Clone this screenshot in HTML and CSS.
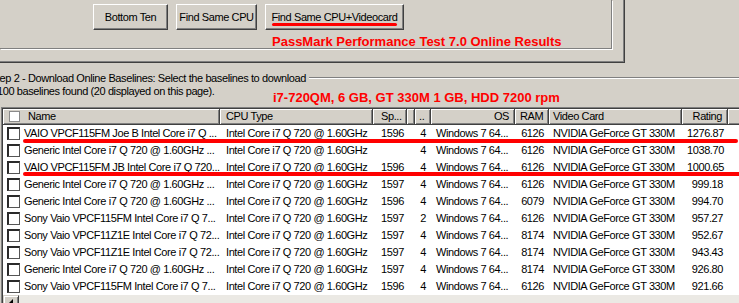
FILE: index.html
```html
<!DOCTYPE html>
<html lang="en">
<head>
    <meta charset="UTF-8">
    <title>PassMark Performance Test 7.0 Online Results</title>
    <link rel="stylesheet" href="styles.css">
</head>
<body>

    <!-- Search buttons panel -->
    <div class="panel">
        <div class="panel-inner">
            <div class="buttons">
                <button class="btn btn-bottom">Bottom Ten</button>
                <button class="btn btn-cpu">Find Same CPU</button>
                <button class="btn btn-video">Find Same CPU+Videocard<span class="ink ink-btn"></span></button>
            </div>
            <div class="note note-title">PassMark Performance Test 7.0 Online Results</div>
        </div>
    </div>

    <!-- Step 2 group -->
    <div class="step">
        <div class="legend-row">
            <span class="legend">Step 2 - Download Online Baselines: Select the baselines to download</span>
            <span class="etch"></span>
        </div>
        <div class="info-row">
            <span class="count">100 baselines found (20 displayed on this page).</span>
            <span class="note note-spec">i7-720QM, 6 GB, GT 330M 1 GB, HDD 7200 rpm</span>
        </div>

        <div class="list">
            <div class="list-inner">
                <div class="hdr">
                    <div class="hc c-name"><span class="chk chk-hdr"></span>Name</div>
                    <div class="hc c-cpu">CPU Type</div>
                    <div class="hc c-sp">Sp...</div>
                    <div class="hc c-x"></div>
                    <div class="hc c-n">..</div>
                    <div class="hc c-os right">OS</div>
                    <div class="hc c-ram right">RAM</div>
                    <div class="hc c-vid">Video Card</div>
                    <div class="hc c-rate right">Rating</div>
                    <div class="hc c-end"></div>
                </div>
                <div id="rows"></div>
                <div class="hscroll"><span class="arrow"></span></div>

                <!-- hand drawn marks over the rows -->
                <span class="ink ink-row1"></span>
                <span class="ink ink-row3"></span>
            </div>
        </div>
    </div>

    <script>
        // Resultados de la busqueda
        const results = [
            ["VAIO VPCF115FM Joe B Intel Core i7 Q ...", "1596", "4", "6126", "1276.87"],
            ["Generic Intel Core i7 Q 720 @ 1.60GHz  ...", "", "4", "6126", "1038.70"],
            ["VAIO VPCF115FM JB Intel Core i7 Q 720...", "1596", "4", "6126", "1000.65"],
            ["Generic Intel Core i7 Q 720 @ 1.60GHz ...", "1597", "4", "6126", "999.18"],
            ["Generic Intel Core i7 Q 720 @ 1.60GHz ...", "1596", "4", "6079", "994.70"],
            ["Sony Vaio VPCF115FM Intel Core i7 Q 7...", "1597", "2", "6126", "957.27"],
            ["Sony Vaio VPCF11Z1E Intel Core i7 Q 72...", "1597", "4", "8174", "952.67"],
            ["Sony Vaio VPCF11Z1E Intel Core i7 Q 72...", "1597", "4", "8174", "943.43"],
            ["Generic Intel Core i7 Q 720 @ 1.60GHz ...", "1597", "4", "8174", "926.80"],
            ["Sony Vaio VPCF115FM  Intel Core i7 Q 7...", "1596", "4", "6126", "921.66"]
        ];

        const rows = document.getElementById('rows');
        results.forEach(function (r) {
            const row = document.createElement('div');
            row.className = 'row';
            row.innerHTML =
                '<div class="cell c-name"><span class="chk"></span><span class="txt"></span></div>' +
                '<div class="cell c-cpu">Intel Core i7 Q 720 @ 1.60GHz</div>' +
                '<div class="cell c-sp">' + r[1] + '</div>' +
                '<div class="cell c-x"></div>' +
                '<div class="cell c-n right">' + r[2] + '</div>' +
                '<div class="cell c-os">Windows 7 64...</div>' +
                '<div class="cell c-ram right">' + r[3] + '</div>' +
                '<div class="cell c-vid">NVIDIA GeForce GT 330M</div>' +
                '<div class="cell c-rate right">' + r[4] + '</div>' +
                '<div class="cell c-end"></div>';
            row.querySelector('.txt').textContent = r[0];
            rows.appendChild(row);
        });
    </script>

</body>
</html>
```

FILE: styles.css
```css
body {
    margin: 0;
    background-color: #d4d0c8;
    font-family: "Liberation Sans", Arial, sans-serif;
    font-size: 11px;
    letter-spacing: -0.4px;
    color: #000;
    height: 303px;
    overflow: hidden;
}

/* top panel */
.panel {
    width: 624px;
    height: 62px;
    border-right: 1px solid #404040;
    border-bottom: 1px solid #404040;
    box-shadow: inset -1px -1px 0 #808080;
}

.panel-inner {
    width: 611px;
    height: 48px;
    border-right: 1px solid #808080;
    border-bottom: 1px solid #808080;
    box-shadow: 1px 1px 0 #fff;
}

.buttons {
    display: flex;
    gap: 8px;
    padding: 4px 0 0 93px;
}

.btn {
    position: relative;
    height: 26px;
    box-sizing: border-box;
    padding: 0;
    font: inherit;
    letter-spacing: inherit;
    white-space: nowrap;
    color: #000;
    background-color: #d4d0c8;
    border: 1px solid;
    border-color: #fff #404040 #404040 #fff;
    box-shadow: inset -1px -1px 0 #808080;
}

.btn-bottom { width: 75px; }
.btn-cpu { width: 81px; }
.btn-video { width: 139px; }

.note {
    color: #f00;
    font-weight: bold;
    font-size: 13px;
    line-height: 15px;
    letter-spacing: 0;
}

.note-title {
    margin: 4px 0 0 272px;
}

/* red marker strokes */
.ink {
    position: absolute;
    height: 4px;
    background-color: #f00;
    border-radius: 2px;
}

.ink-btn {
    left: 6px;
    top: 18px;
    width: 125px;
    height: 3px;
}

.ink-row1 {
    left: 20px;
    top: 30px;
    width: 715px;
}

.ink-row3 {
    left: 20px;
    top: 63px;
    width: 740px;
}

/* step 2 group */
.step {
    margin-top: 8px;
}

.legend-row {
    display: flex;
    align-items: center;
    height: 14px;
    margin-left: -10px;
}

.legend {
    flex: none;
    line-height: 14px;
}

.etch {
    flex: 1;
    height: 0;
    margin-left: 3px;
    border-top: 1px solid #808080;
    border-bottom: 1px solid #fff;
}

.info-row {
    display: flex;
    align-items: flex-start;
    height: 22px;
}

.count {
    flex: none;
    width: 276px;
    margin-left: -3px;
    line-height: 13px;
}

.note-spec {
    margin-top: 5px;
}

/* list view */
.list {
    margin-left: 1px;
    border-top: 1px solid #808080;
    border-left: 1px solid #808080;
}

.list-inner {
    position: relative;
    border-top: 1px solid #404040;
    border-left: 1px solid #404040;
    background-color: #fff;
}

.hdr, .row {
    display: flex;
}

.hdr {
    height: 16px;
    line-height: 15px;
}

.row {
    height: 17px;
    line-height: 17px;
}

.hc, .cell {
    flex: none;
    box-sizing: border-box;
    padding: 0 5px;
    overflow: hidden;
    white-space: nowrap;
}

.hc {
    height: 16px;
    background-color: #d4d0c8;
    border-right: 1px solid #404040;
    border-bottom: 1px solid #404040;
    box-shadow: inset 1px 1px 0 #fff, inset -1px -1px 0 #808080;
}

.right {
    text-align: right;
}

.c-name { width: 217px; display: flex; align-items: center; padding: 0; }
.c-cpu { width: 153px; padding-left: 6px; }
.c-sp { width: 34px; padding-left: 8px; }
.c-x { width: 8px; padding: 0; }
.c-n { width: 16px; padding: 0 5px 0 4px; }
.c-os { width: 84px; }
.c-ram { width: 34px; }
.c-vid { width: 133px; padding-left: 4px; }
.c-rate { width: 46px; }
.c-end { width: 60px; }

.chk {
    flex: none;
    box-sizing: border-box;
    width: 13px;
    height: 13px;
    margin: 0 4px 0 4px;
    background-color: #fff;
    border: 2px solid #2a2a2a;
    border-right-width: 1px;
    border-bottom-width: 1px;
    border-right-color: #555;
    border-bottom-color: #555;
}

.chk-hdr {
    width: 11px;
    height: 11px;
    margin: 0 8px 0 6px;
    border: 1px solid #8a8a8a;
}

.hscroll {
    height: 16px;
    background-color: #ebe9e4;
}

.arrow {
    display: block;
    position: relative;
    width: 16px;
    height: 16px;
    box-sizing: border-box;
    background-color: #d4d0c8;
    border: 1px solid;
    border-color: #d4d0c8 #404040 #404040 #d4d0c8;
    box-shadow: inset 1px 1px 0 #fff, inset -1px -1px 0 #808080;
}

.arrow::after {
    content: "";
    position: absolute;
    left: 5px;
    top: 3px;
    border-right: 4px solid #000;
    border-top: 4px solid transparent;
    border-bottom: 4px solid transparent;
}
```
